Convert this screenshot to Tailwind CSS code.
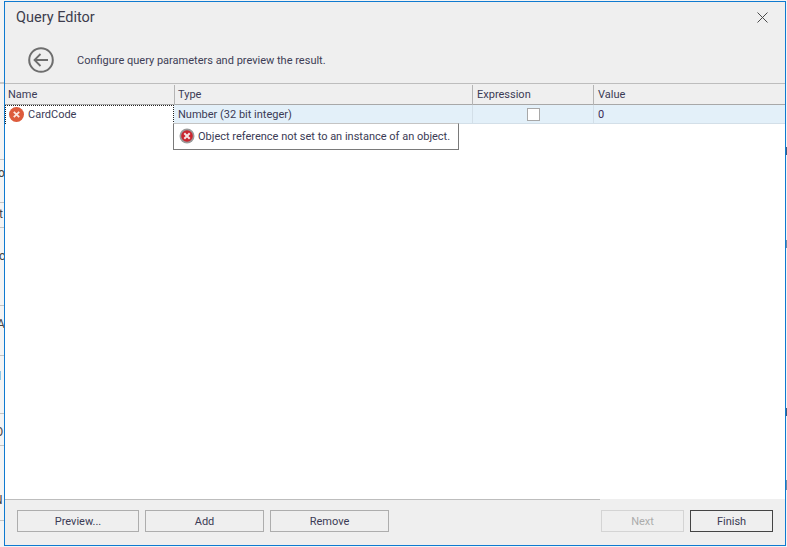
<!DOCTYPE html>
<html>
<head>
<meta charset="utf-8">
<script src="https://cdn.jsdelivr.net/npm/@tailwindcss/browser@4"></script>
</head>
<body class="bg-white">
<div class="relative w-[787px] h-[547px] overflow-hidden bg-[#f4f4f4] font-['Roboto',sans-serif] text-[11px] text-[#3b3b55]">
  <!-- desktop behind the dialog -->
  <div class="absolute left-0 top-[82px] w-[4px] h-[2px] bg-[#c8c8c8]"></div>
  <div class="absolute left-0 top-[159px] w-[4px] h-px bg-[#c4c4c4]"></div>
  <div class="absolute left-0 top-[202px] w-[4px] h-px bg-[#c4c4c4]"></div>
  <div class="absolute left-0 top-[227px] w-[4px] h-px bg-[#c4c4c4]"></div>
  <div class="absolute left-0 top-[305px] w-[4px] h-px bg-[#c4c4c4]"></div>
  <div class="absolute left-0 top-[355px] w-[4px] h-px bg-[#c4c4c4]"></div>
  <div class="absolute left-0 top-[413px] w-[4px] h-px bg-[#c4c4c4]"></div>
  <div class="absolute left-0 top-[445px] w-[4px] h-px bg-[#c4c4c4]"></div>
  <div class="absolute left-0 top-[520px] w-[4px] h-px bg-[#c4c4c4]"></div>
  <span class="absolute left-[-2px] top-[164px] text-[12px] text-[#444]">o</span>
  <span class="absolute left-[-1px] top-[205px] text-[12px] text-[#444]">t</span>
  <span class="absolute left-[-1px] top-[247px] text-[12px] text-[#444]">c</span>
  <span class="absolute left-[-3px] top-[315px] text-[12px] text-[#444]">A</span>
  <span class="absolute left-[-2px] top-[367px] text-[12px] text-[#444]">I</span>
  <span class="absolute left-[-5px] top-[423px] text-[12px] text-[#444]">O</span>
  <span class="absolute left-[-6px] top-[491px] text-[12px] text-[#444]">N</span>
  <div class="absolute left-[786px] top-[147px] w-px h-[8px] bg-[#3a5a80]"></div>
  <div class="absolute left-[786px] top-[240px] w-px h-[8px] bg-[#6b8aa5]"></div>
  <div class="absolute left-[786px] top-[408px] w-px h-[8px] bg-[#3a5a80]"></div>
  <div class="absolute left-[786px] top-[480px] w-px h-[10px] bg-[#6b8aa5]"></div>

  <!-- dialog -->
  <div class="absolute left-[4px] top-[1px] w-[782px] h-[545px] border border-[#0f7ad0] bg-white flex flex-col">
    <header class="h-[81px] shrink-0 bg-[#efefef] flex flex-col">
      <div class="h-[30px] flex items-center justify-between pl-[11px] pr-[17px]">
        <span class="text-[14.5px] text-[#3d3d4d] leading-[17px] mt-px">Query Editor</span>
        <svg class="w-[11px] h-[11px]" viewBox="0 0 11 11" fill="none" stroke="#4a4a4a" stroke-width="1"><path d="M0.5 0.5 L10.5 10.5 M10.5 0.5 L0.5 10.5"/></svg>
      </div>
      <div class="flex items-center pl-[23px] mt-[15px]">
        <svg class="w-[26px] h-[26px]" viewBox="0 0 26 26" fill="none" stroke="#6e6e6e" stroke-width="2"><circle cx="13" cy="13" r="11.8"/><path d="M6.5 13 H20 M12.5 7 L6.5 13 L12.5 19" stroke-width="1.8"/></svg>
        <span class="ml-[23px] mt-[3px] text-[#3d3d55]">Configure query parameters and preview the result.</span>
      </div>
    </header>

    <div class="grid grid-cols-[169px_298px_121px_1fr] h-[22px] shrink-0 bg-[#efefef] border-y border-t-[#bdbdbd] border-b-[#a8a8a8] leading-[20px]">
      <div class="pl-[3px] my-px">Name</div>
      <div class="pl-[3px] border-l border-[#b4b4b4] my-px">Type</div>
      <div class="pl-[3px] border-l border-[#b4b4b4] my-px"><span class="ml-px">Expression</span></div>
      <div class="pl-[4px] border-l border-[#b4b4b4] my-px">Value</div>
    </div>

    <div class="grid grid-cols-[169px_298px_121px_1fr] h-[19px] shrink-0 bg-[#e3f0f9] border-b border-[#d3dfe8] leading-[20px]">
      <div class="bg-white flex items-center pl-[3px] border border-dotted border-[#222] -mb-px">
        <svg class="w-[15px] h-[15px] shrink-0 -mt-[2px]" viewBox="0 0 15 15"><circle cx="7.5" cy="7.5" r="7.5" fill="#dd5b3c"/><path d="M4.8 4.8 L10.2 10.2 M10.2 4.8 L4.8 10.2" stroke="#fbe7e0" stroke-width="1.8"/></svg>
        <span class="ml-[4px] -mt-px">CardCode</span>
      </div>
      <div class="pl-[4px]">Number (32 bit integer)</div>
      <div class="border-l border-[#d3dfe8] flex items-center justify-center">
        <div class="w-[13px] h-[13px] bg-white border border-[#a8a8a8] -mt-px"></div>
      </div>
      <div class="pl-[4px] border-l border-[#d3dfe8] text-[#3b2a55]">0</div>
    </div>

    <main class="flex-1 bg-white"></main>

    <footer class="relative h-[46px] shrink-0 bg-[#efefef] flex items-start pt-[11px] pl-[12px] pr-[12px]">
      <div class="absolute left-0 top-0 w-[595px] h-px bg-[#bdbdbd]"></div>
      <div class="flex gap-[6px]">
        <button class="w-[122px] h-[22px] border border-[#adadad] text-center leading-[20px] pt-px">Preview...</button>
        <button class="w-[119px] h-[22px] border border-[#adadad] text-center leading-[20px] pt-px">Add</button>
        <button class="w-[119px] h-[22px] border border-[#adadad] text-center leading-[20px] pt-px">Remove</button>
      </div>
      <div class="ml-auto flex gap-[6px]">
        <button class="w-[83px] h-[22px] border border-[#d4d4d4] text-[#acacac] text-center leading-[20px] pt-px">Next</button>
        <button class="w-[83px] h-[22px] border border-[#444] text-center leading-[20px] pt-px">Finish</button>
      </div>
    </footer>
  </div>

  <!-- validation tooltip -->
  <div class="absolute left-[173px] top-[123px] w-[286px] h-[27px] bg-white border border-[#7a7a7a] border-t-[#c4c4c4] flex items-center pl-[5px]">
    <svg class="w-[16px] h-[16px] shrink-0 -mt-px" viewBox="0 0 16 16"><circle cx="8" cy="8" r="7.5" fill="#9a9a9a"/><circle cx="8" cy="8" r="5.8" fill="#c9252f"/><path d="M5.3 5.3 L10.7 10.7 M10.7 5.3 L5.3 10.7" stroke="#f5e4e4" stroke-width="2"/></svg>
    <span class="ml-[3px] mt-[2px] whitespace-nowrap">Object reference not set to an instance of an object.</span>
  </div>
</div>
</body>
</html>
